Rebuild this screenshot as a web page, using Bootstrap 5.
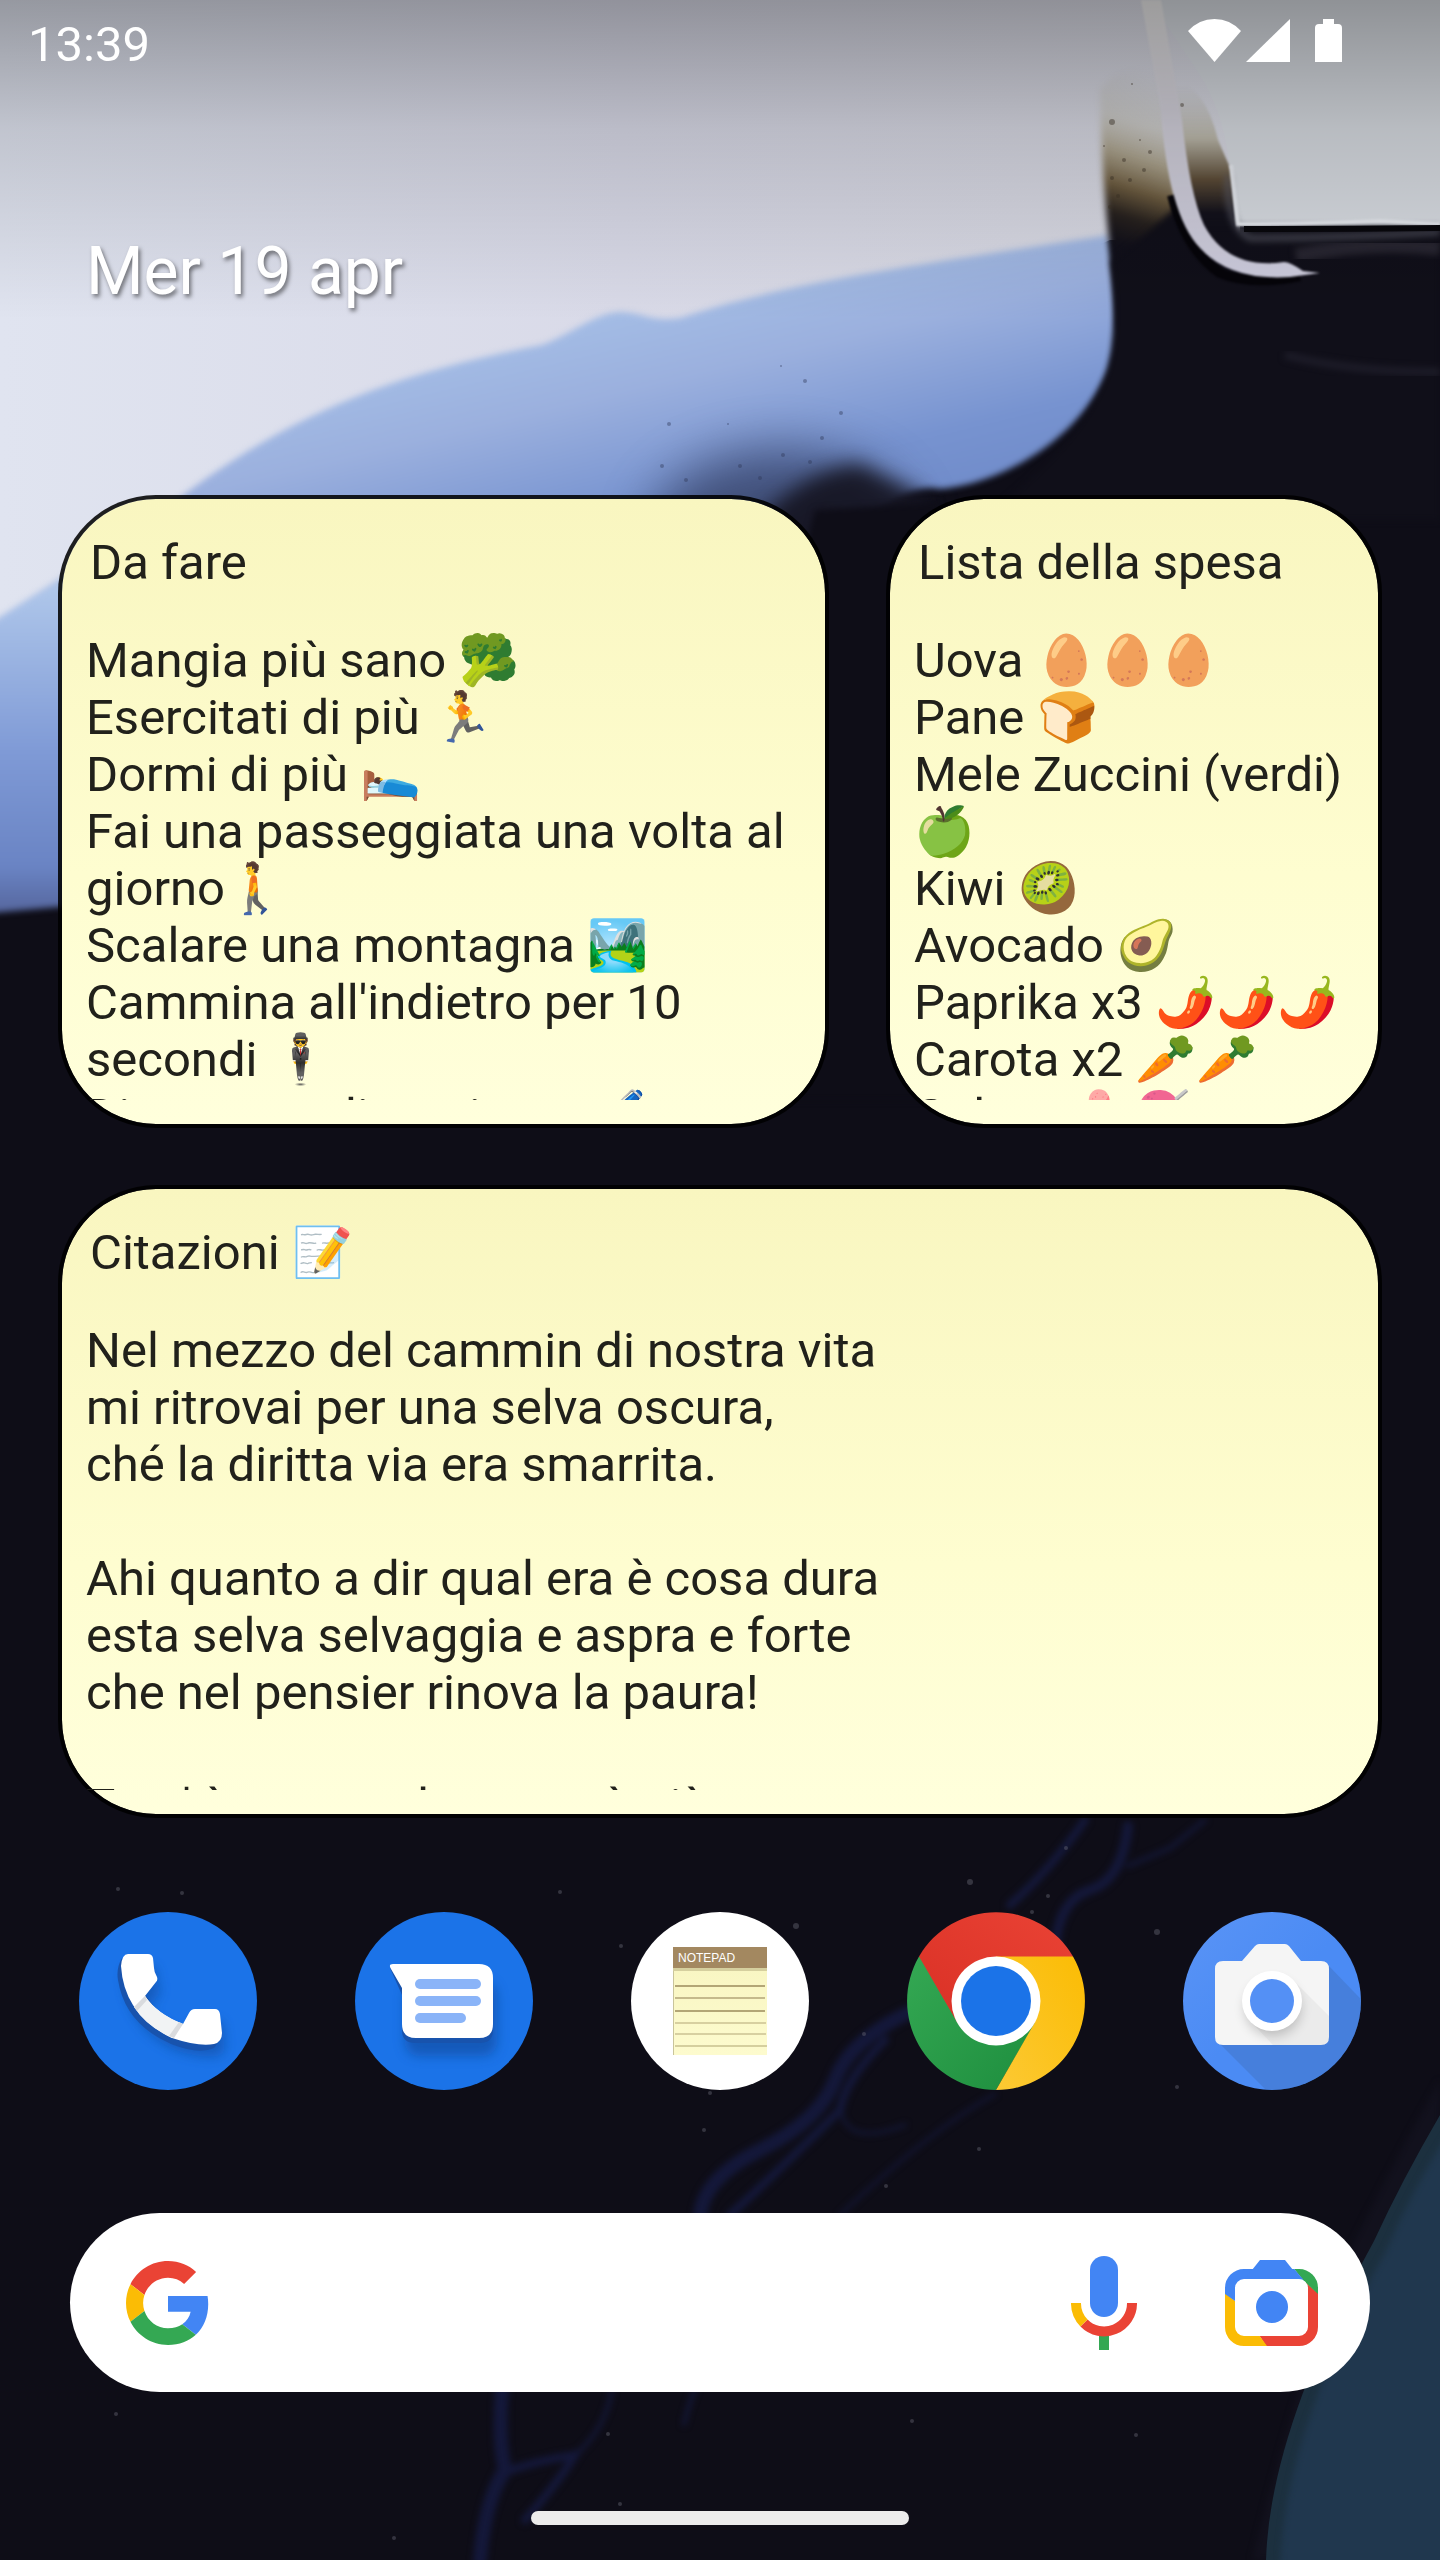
<!DOCTYPE html>
<html lang="it">
<head>
<meta charset="utf-8">
<meta name="viewport" content="width=device-width, initial-scale=1">
<title>Schermata Home</title>
<link href="https://cdn.jsdelivr.net/npm/bootstrap@5.3.0/dist/css/bootstrap.min.css" rel="stylesheet">
<style>
  body {
    font-family: Roboto, "Noto Sans", sans-serif;
    font-size: 49px;
    line-height: 57px;
    background: #0e0d17;
    color: #fff;
  }
  .wallpaper { z-index: -1; }
  .wallpaper filter { color-interpolation-filters: sRGB; }
  .status-bar { padding: 16px 98px 0 28px; }
  .status-icons { height: 46px; }
  .date-line {
    margin: 160px 86px 184px;
    font-size: 66px;
    line-height: 78px;
    text-shadow: 2px 3px 4px rgba(0, 0, 0, .5);
  }
  .date-line a { color: #fff; }
  .notes {
    display: grid;
    grid-template-columns: 771fr 496fr;
    gap: 57px;
    padding: 0 58px;
  }
  .note {
    height: 633px;
    padding: 35px 24px 24px;
    border: 4px solid rgba(0, 0, 0, .87);
    border-radius: 98px;
    background: linear-gradient(#f9f6c0, #fefdd0 60%, #ffffdc) padding-box;
    color: #21211b;
  }
  .note-wide { grid-column: 1 / -1; }
  .note-title { font-size: 49px; line-height: 57px; margin: 0 4px 41px; font-weight: 400; }
  .note-body { overflow: hidden; min-height: 0; }
  .dock { margin: 94px 30px 123px; }
  .app svg { display: block; width: 178px; height: 178px; }
  .search { margin: 0 70px 119px; padding: 0 52px 0 56px; height: 179px; border-radius: 90px; background: #fff; }
  .search input { font-size: 49px; background: transparent; box-shadow: none; }
  .search-tools { gap: 88px; }
  .home-bar { width: 378px; height: 14px; border-radius: 7px; background: #ececec; margin-bottom: 35px; }
</style>
</head>
<body class="min-vh-100 d-flex flex-column position-relative overflow-x-hidden">

<svg class="wallpaper position-absolute top-0 start-0 w-100 h-100" viewBox="0 0 1440 2560" preserveAspectRatio="xMidYMid slice" aria-hidden="true">
  <defs>
    <linearGradient id="shade" x1="0" y1="0" x2="0" y2="1">
      <stop offset="0" stop-color="#000" stop-opacity=".33"/>
      <stop offset=".4" stop-color="#000" stop-opacity=".14"/>
      <stop offset="1" stop-color="#000" stop-opacity="0"/>
    </linearGradient>
    <linearGradient id="mist" gradientUnits="userSpaceOnUse" x1="0" y1="0" x2="1240" y2="0">
      <stop offset="0" stop-color="#e0e4f0"/><stop offset=".5" stop-color="#d9dae8"/><stop offset="1" stop-color="#d6d7e0"/>
    </linearGradient>
    <linearGradient id="blue" gradientUnits="userSpaceOnUse" x1="560" y1="300" x2="680" y2="800">
      <stop offset="0" stop-color="#a6c0e7"/><stop offset=".2" stop-color="#9bb0de"/><stop offset=".42" stop-color="#7793d0"/><stop offset="1" stop-color="#5a72b4"/>
    </linearGradient>
    <linearGradient id="blueSide" gradientUnits="userSpaceOnUse" x1="0" y1="590" x2="0" y2="915">
      <stop offset="0" stop-color="#aec6ea"/><stop offset=".5" stop-color="#7f9ad6"/><stop offset=".85" stop-color="#6a84c4"/><stop offset="1" stop-color="#55659c"/>
    </linearGradient>
    <linearGradient id="smoke" gradientUnits="userSpaceOnUse" x1="1175" y1="80" x2="1125" y2="245">
      <stop offset="0" stop-color="#c5c4bd" stop-opacity="0"/>
      <stop offset=".3" stop-color="#c6c4ba" stop-opacity=".6"/>
      <stop offset=".5" stop-color="#a59b82" stop-opacity=".9"/>
      <stop offset=".68" stop-color="#6d5c40"/>
      <stop offset=".84" stop-color="#27211e"/>
      <stop offset="1" stop-color="#11101a"/>
    </linearGradient>
    <linearGradient id="smokeR" gradientUnits="userSpaceOnUse" x1="0" y1="85" x2="0" y2="220">
      <stop offset="0" stop-color="#c5c4bd" stop-opacity="0"/>
      <stop offset=".4" stop-color="#bab6a8"/>
      <stop offset=".7" stop-color="#5c4c37"/>
      <stop offset=".95" stop-color="#12111b"/>
    </linearGradient>
    <linearGradient id="strip" x1="0" y1="0" x2="0" y2="1">
      <stop offset="0" stop-color="#eae9e9"/><stop offset=".4" stop-color="#d2d0da"/><stop offset="1" stop-color="#cccbdc"/>
    </linearGradient>
    <filter id="soft1" x="-20%" y="-20%" width="140%" height="140%"><feGaussianBlur stdDeviation="1"/></filter>
    <filter id="soft3" x="-20%" y="-20%" width="140%" height="140%"><feGaussianBlur stdDeviation="3"/></filter>
    <filter id="soft9" x="-30%" y="-60%" width="160%" height="220%"><feGaussianBlur stdDeviation="10"/></filter>
    <filter id="soft30" x="-50%" y="-80%" width="200%" height="260%"><feGaussianBlur stdDeviation="26"/></filter>
  </defs>
  <rect width="1440" height="2560" fill="#0e0d17"/>
  <!-- pale sky -->
  <path d="M0 0H1240V240H1110L700 420L0 700Z" fill="url(#mist)"/>
  <path d="M1150 0H1440V226H1229V160Q1222 110 1200 75Z" fill="#d6dae0"/>
  <!-- blue wave -->
  <g filter="url(#soft3)">
    <path d="M-20 630L60 579C100 552 150 522 190 490C300 410 400 372 542 345C570 335 595 313 620 312C645 313 650 322 680 318C790 282 900 268 1109 235C1115 285 1120 325 1108 370C1080 440 1000 484 940 489Q900 480 820 560L700 720H-20Z" fill="url(#blue)"/>
    <path d="M-20 630L70 574V906L-20 914Z" fill="url(#blueSide)"/>
  </g>
  <ellipse cx="780" cy="535" rx="130" ry="85" fill="#2a3354" opacity=".7" filter="url(#soft30)"/>
  <path d="M740 540Q800 468 860 464Q890 480 925 496V620H740Z" fill="#14131f" opacity=".9" filter="url(#soft9)"/>
  <path d="M815 510L940 503V1100H780V640Z" fill="#0e0d17" filter="url(#soft3)"/>
  <g fill="#2c3554" opacity=".4">
    <circle cx="728" cy="424" r="1"/><circle cx="740" cy="466" r="2"/><circle cx="781" cy="366" r="1"/><circle cx="805" cy="381" r="2"/><circle cx="841" cy="413" r="2"/><circle cx="822" cy="438" r="2"/><circle cx="783" cy="455" r="2"/><circle cx="760" cy="478" r="2"/><circle cx="669" cy="424" r="2"/><circle cx="686" cy="480" r="2"/><circle cx="662" cy="466" r="2"/><circle cx="810" cy="462" r="2"/>
  </g>
  <!-- smoked glass corner -->
  <path d="M1100 90Q1120 62 1160 72L1182 240L1150 330L1118 330L1109 240Q1102 180 1100 90Z" fill="url(#smoke)" filter="url(#soft3)"/>
  <path d="M1172 80Q1205 85 1218 140L1231 170L1237 235L1250 270H1178Z" fill="url(#smokeR)" filter="url(#soft1)"/>
  <path d="M1111 262Q1140 240 1178 205L1190 226H1440V520H980Q1100 430 1113 350Q1118 300 1111 262Z" fill="#100f19" filter="url(#soft3)"/>
  <g fill="#3c3226" opacity=".45">
    <circle cx="1112" cy="122" r="3"/><circle cx="1182" cy="105" r="2"/><circle cx="1132" cy="84" r="1"/><circle cx="1104" cy="146" r="1"/><circle cx="1140" cy="140" r="1"/><circle cx="1124" cy="160" r="2"/><circle cx="1150" cy="152" r="2"/><circle cx="1112" cy="178" r="2"/><circle cx="1130" cy="180" r="2"/><circle cx="1118" cy="196" r="2"/><circle cx="1144" cy="170" r="2"/><circle cx="1110" cy="207" r="2"/>
  </g>
  <path d="M1228 175Q1226 226 1250 238Q1340 238 1440 232" fill="none" stroke="#5b5c68" stroke-width="7" opacity=".6" filter="url(#soft3)"/>
  <path d="M1231 165L1238 224Q1300 224 1380 221L1440 224" fill="none" stroke="#e6e9ef" stroke-width="4" filter="url(#soft1)"/>
  <path d="M1244 229Q1340 229 1440 228" fill="none" stroke="#08070c" stroke-width="6"/>
  <path d="M1296 256Q1370 240 1440 248" fill="none" stroke="#272530" stroke-width="15" filter="url(#soft3)"/>
  <path d="M1285 355Q1350 372 1440 372" fill="none" stroke="#1d1c28" stroke-width="8" filter="url(#soft3)"/>
  <path d="M1172 195Q1186 250 1220 273Q1250 286 1300 276" fill="none" stroke="#050409" stroke-width="10" filter="url(#soft1)"/>
  <path d="M1141 0L1161 110Q1168 215 1200 248Q1230 281 1290 277L1320 273L1303 271Q1290 262 1284 262Q1228 270 1204 225Q1190 195 1182 120L1161 0Z" fill="url(#strip)" filter="url(#soft1)"/>
  <!-- night veins -->
  <g fill="none" stroke="#14183a" stroke-linecap="round" filter="url(#soft3)">
    <path d="M1085 1820Q1050 1870 1010 1905" stroke-width="8"/>
    <path d="M1128 1826Q1122 1880 1090 1890T1055 1950" stroke-width="10"/>
    <path d="M1128 1866L1170 1848L1205 1820" stroke-width="4"/>
    <path d="M910 2012Q850 2040 835 2080T760 2150T700 2220" stroke-width="14"/>
    <path d="M885 2040Q845 2080 840 2110Q790 2160 730 2215" stroke-width="8"/>
    <path d="M840 2100Q840 2150 905 2125" stroke-width="3"/>
    <path d="M995 2094Q930 2130 840 2215" stroke-width="3"/>
    <path d="M502 2390Q498 2440 505 2470Q485 2500 480 2560" stroke-width="14"/>
    <path d="M505 2472Q540 2460 575 2455Q560 2480 525 2520" stroke-width="8"/>
    <path d="M612 2390Q605 2430 575 2455" stroke-width="4"/>
    <path d="M695 2390Q690 2400 684 2424" stroke-width="4"/>
  </g>
  <g fill="#6e6e7c" opacity=".4">
    <circle cx="970" cy="1882" r="3"/><circle cx="1066" cy="1848" r="2"/><circle cx="796" cy="1926" r="3"/><circle cx="118" cy="1889" r="2"/><circle cx="182" cy="1893" r="2"/><circle cx="1157" cy="1932" r="3"/><circle cx="710" cy="2093" r="2"/><circle cx="979" cy="2149" r="2"/><circle cx="1048" cy="1896" r="2"/><circle cx="1032" cy="1912" r="2"/><circle cx="864" cy="2034" r="2"/><circle cx="886" cy="2186" r="2"/><circle cx="704" cy="2130" r="2"/><circle cx="394" cy="2538" r="2"/><circle cx="608" cy="2434" r="2"/><circle cx="620" cy="2504" r="2"/><circle cx="912" cy="2421" r="2"/><circle cx="1136" cy="2435" r="2"/><circle cx="116" cy="2414" r="2"/><circle cx="560" cy="1892" r="2"/><circle cx="621" cy="1946" r="2"/><circle cx="1177" cy="2087" r="2"/>
  </g>
  <!-- teal planet -->
  <path d="M1440 2080Q1400 2150 1355 2240T1252 2560H1300L1440 2200Z" fill="#12111d" filter="url(#soft3)"/>
  <path d="M1440 2115Q1402 2180 1374 2241Q1270 2430 1266 2560H1440Z" fill="#1c303f"/>
  <path d="M1450 2130Q1412 2190 1386 2251Q1284 2430 1280 2570H1450Z" fill="#20374e" filter="url(#soft3)"/>
  <rect width="1440" height="320" fill="url(#shade)"/>
</svg>

<header class="status-bar d-flex justify-content-between align-items-start">
  <time>13:39</time>
  <svg class="status-icons" width="154" height="46" viewBox="0 0 154 46" fill="#fff" role="img" aria-label="Wi-Fi, segnale, batteria">
    <path d="M0 15Q11 3 26.500 3Q42 3 53 15L26.500 46Z"/>
    <path d="M102 3V46H58Z"/>
    <path d="M135 3H146V8H150Q154 8 154 12V45Q154 49 150 49H131Q127 49 127 45V12Q127 8 131 8H135Z"/>
  </svg>
</header>

<p class="date-line"><a href="#" class="text-decoration-none">Mer 19 apr</a></p>

<main class="notes">
  <section class="note d-flex flex-column">
    <h2 class="note-title">Da fare</h2>
    <ul class="note-body list-unstyled mb-0">
      <li>Mangia più sano 🥦</li>
      <li>Esercitati di più 🏃</li>
      <li>Dormi di più 🛌</li>
      <li>Fai una passeggiata una volta al giorno🚶</li>
      <li>Scalare una montagna 🏞️</li>
      <li>Cammina all'indietro per 10 secondi 🕴️</li>
      <li>Disegna re di parti e te 🖊️</li>
    </ul>
  </section>
  <section class="note d-flex flex-column">
    <h2 class="note-title">Lista della spesa</h2>
    <ul class="note-body list-unstyled mb-0">
      <li>Uova 🥚🥚🥚</li>
      <li>Pane 🍞</li>
      <li>Mele Zuccini (verdi) 🍏</li>
      <li>Kiwi 🥝</li>
      <li>Avocado 🥑</li>
      <li>Paprika x3 🌶️🌶️🌶️</li>
      <li>Carota x2 🥕🥕</li>
      <li>Gelato 🍨🍧</li>
    </ul>
  </section>
  <section class="note note-wide d-flex flex-column">
    <h2 class="note-title">Citazioni 📝</h2>
    <div class="note-body">
      Nel mezzo del cammin di nostra vita<br>
      mi ritrovai per una selva oscura,<br>
      ché la diritta via era smarrita.<br><br>
      Ahi quanto a dir qual era è cosa dura<br>
      esta selva selvaggia e aspra e forte<br>
      che nel pensier rinova la paura!<br><br>
      Tant' è amara che poco è più morte;
    </div>
  </section>
</main>

<nav class="dock d-flex" aria-label="App">
  <a href="#" class="app flex-fill d-flex justify-content-center" aria-label="Telefono">
    <svg viewBox="0 0 178 178">
      <defs><filter id="drop" x="-30%" y="-30%" width="160%" height="170%"><feGaussianBlur stdDeviation="6"/></filter></defs>
      <circle cx="89" cy="89" r="89" fill="#1b73e8"/>
      <path d="M42 54Q43 42 49 42H69Q73 42 74 46L75 56Q75 60 78 65Q79 68 77 70L66 84Q78 102 104 112L110 101Q112 97 116 97H136Q140 97 141 102L143 121Q143 130 135 132Q120 135 93 126Q45 103 42 54Z" fill="#0c3f8a" opacity=".45" transform="translate(3 12)" filter="url(#drop)"/>
      <path d="M43 46Q37 56 39 68Q46 112 92 132Q120 143 135 136L141 128L93 120L50 60Z" fill="#1853ad"/>
      <path d="M42 54Q43 42 49 42H69Q73 42 74 46L75 56Q75 60 78 65Q79 68 77 70L66 84Q78 102 104 112L110 101Q112 97 116 97H136Q140 97 141 102L143 121Q143 130 135 132Q120 135 93 126Q45 103 42 54Z" fill="#fff"/>
      <path d="M66 84Q78 102 104 112L93 126Q67 114 55 95Z" fill="#f1f3f4"/>
      <path d="M66 84L68 88L58 99L55 95Z M104 112L100 110L90 124L95 126Z" fill="#d9dbde"/>
    </svg>
  </a>
  <a href="#" class="app flex-fill d-flex justify-content-center" aria-label="Messaggi">
    <svg viewBox="0 0 178 178">
      <circle cx="89" cy="89" r="89" fill="#1b73e8"/>
      <rect x="50" y="70" width="92" height="74" rx="14" fill="#0c3f8a" opacity=".5" filter="url(#drop)"/>
      <path d="M35 56L47 83V118Q47 131 60 131H125Q138 131 138 118V80Z" fill="#1853ad"/>
      <path d="M38 52H124Q138 52 138 66V112Q138 126 124 126H61Q47 126 47 112V76L36 57Q33 52 38 52Z" fill="#fff"/>
      <g fill="#8ab4f8"><rect x="60" y="67" width="66" height="10" rx="5"/><rect x="60" y="84" width="66" height="10" rx="5"/><rect x="60" y="101" width="51" height="10" rx="5"/></g>
    </svg>
  </a>
  <a href="#" class="app flex-fill d-flex justify-content-center" aria-label="Notepad">
    <svg viewBox="0 0 178 178">
      <defs><linearGradient id="paper" x1="0" y1="0" x2="0" y2="1"><stop offset="0" stop-color="#f8f5c0"/><stop offset="1" stop-color="#fdfbce"/></linearGradient></defs>
      <circle cx="89" cy="89" r="89" fill="#fff"/>
      <rect x="42" y="35" width="94" height="108" fill="url(#paper)"/>
      <path d="M42.500 56V143" stroke="#c9c49b"/>
      <rect x="42" y="56" width="94" height="3" fill="#d5cf9e"/>
      <rect x="42" y="35" width="94" height="21" fill="#a38860"/>
      <text x="47" y="50" font-family="Liberation Sans, sans-serif" font-size="12" fill="#fff">NOTEPAD</text>
      <g stroke="#b3a676" stroke-width="2"><path d="M44 74H134M44 99H134" /><path d="M44 111H135M44 122H135" stroke-width="1"/><path d="M44 134H136" stroke="#d5cf9e"/><path d="M44 86H134" stroke="#8f7d50" stroke-width="1"/></g>
    </svg>
  </a>
  <a href="#" class="app flex-fill d-flex justify-content-center" aria-label="Chrome">
    <svg viewBox="0 0 178 178">
      <defs>
        <linearGradient id="cr" x1="0" y1="1" x2="1" y2="0"><stop offset="0" stop-color="#d93025"/><stop offset="1" stop-color="#ea4335"/></linearGradient>
        <linearGradient id="cg" x1="0" y1="0" x2="1" y2="1"><stop offset="0" stop-color="#34a853"/><stop offset="1" stop-color="#1e8e3e"/></linearGradient>
        <linearGradient id="cy" x1="0" y1="1" x2="1" y2="0"><stop offset="0" stop-color="#fcc934"/><stop offset="1" stop-color="#fbbc04"/></linearGradient>
      </defs>
      <path d="M12 44.500A89 89 0 0 0 89 178L128 111L89 89Z" fill="url(#cg)"/>
      <path d="M12 44.500A89 89 0 0 1 166 44.500L89 89L50.500 111Z" fill="url(#cr)"/>
      <path d="M166 44.500A89 89 0 0 1 89 178L127.500 111L89 89V44.500Z" fill="url(#cy)"/>
      <circle cx="89" cy="89" r="44.500" fill="#fff"/><circle cx="89" cy="89" r="35" fill="#1b73e8"/>
    </svg>
  </a>
  <a href="#" class="app flex-fill d-flex justify-content-center" aria-label="Fotocamera">
    <svg viewBox="0 0 178 178">
      <defs>
        <linearGradient id="cam" x1="0" y1="0" x2="1" y2="1"><stop offset="0" stop-color="#5a94f6"/><stop offset=".5" stop-color="#4b8bf4"/></linearGradient>
        <clipPath id="camClip"><circle cx="89" cy="89" r="89"/></clipPath>
        <clipPath id="bodyClip"><rect x="32" y="49" width="114" height="84" rx="8"/></clipPath>
      </defs>
      <circle cx="89" cy="89" r="89" fill="url(#cam)"/>
      <path d="M144 52L200 110V200H105L35 130Z" fill="#3f6fb9" opacity=".4" clip-path="url(#camClip)"/>
      <path d="M40 49H59L72 34Q74 32 76 32H102Q104 32 106 34L118 49H138Q146 49 146 57V125Q146 133 138 133H40Q32 133 32 125V57Q32 49 40 49Z" fill="#f5f5f5"/>
      <path d="M110 68L160 118V150H106L68 110Z" fill="#000" opacity=".04" clip-path="url(#bodyClip)"/>
      <circle cx="90" cy="96" r="28" fill="#000" opacity=".2" filter="url(#drop)"/>
      <circle cx="89" cy="89" r="30" fill="#fff"/><circle cx="89" cy="89" r="22" fill="#5490f5"/>
    </svg>
  </a>
</nav>

<form class="search d-flex align-items-center" role="search">
  <label for="q" class="flex-shrink-0 d-flex" aria-label="Cerca con Google">
    <svg width="84" height="84" viewBox="0 0 48 48">
      <path fill="#ea4335" d="M24 9.500c3.540 0 6.710 1.220 9.210 3.600l6.850-6.850C35.900 2.380 30.470 0 24 0 14.620 0 6.510 5.380 2.560 13.220l7.980 6.190C12.430 13.720 17.740 9.500 24 9.500z"/>
      <path fill="#4285f4" d="M46.980 24.550c0-1.570-.15-3.090-.38-4.550H24v9.020h12.940c-.58 2.960-2.260 5.480-4.780 7.180l7.730 6c4.510-4.180 7.090-10.360 7.090-17.650z"/>
      <path fill="#fbbc05" d="M10.530 28.590c-.48-1.450-.76-2.990-.76-4.590s.27-3.140.76-4.590l-7.980-6.190C.92 16.460 0 20.120 0 24c0 3.880.92 7.540 2.560 10.780l7.970-6.190z"/>
      <path fill="#34a853" d="M24 48c6.480 0 11.930-2.130 15.890-5.810l-7.730-6c-2.150 1.450-4.920 2.300-8.160 2.300-6.260 0-11.570-4.220-13.470-9.910l-7.980 6.190C6.510 42.620 14.620 48 24 48z"/>
    </svg>
  </label>
  <input id="q" type="search" class="form-control border-0 flex-fill mx-3">
  <div class="search-tools d-flex align-items-center flex-shrink-0">
    <button type="button" class="btn p-0 border-0 d-flex" aria-label="Ricerca vocale">
      <svg width="66" height="94" viewBox="0 0 66 94">
        <rect x="19" y="0" width="28" height="61" rx="14" fill="#4285f4"/>
        <rect x="28" y="78" width="10" height="16" fill="#34a853"/>
        <path d="M61 47A28 28 0 0 1 13 67" fill="none" stroke="#ea4335" stroke-width="10"/>
        <path d="M5 47A28 28 0 0 0 13 67" fill="none" stroke="#fbbc05" stroke-width="10"/>
      </svg>
    </button>
    <button type="button" class="btn p-0 border-0 d-flex" aria-label="Google Lens">
      <svg width="93" height="86" viewBox="0 0 93 86">
        <defs>
          <clipPath id="lb"><path d="M0 0H62L80 22L47 47L10 41L0 34Z"/></clipPath>
          <clipPath id="lg"><path d="M62 0H93V34L80 22L78 20Z"/></clipPath>
          <clipPath id="lr"><path d="M93 33L80 22L47 47L34 75L41 86H93Z"/></clipPath>
          <clipPath id="ly"><path d="M0 33L10 41L47 47L34 75L42 86H0Z"/></clipPath>
        </defs>
        <g fill="none" stroke-width="10">
          <rect x="5" y="14" width="83" height="67" rx="14" stroke="#ea4335" clip-path="url(#lr)"/>
          <rect x="5" y="14" width="83" height="67" rx="14" stroke="#34a853" clip-path="url(#lg)"/>
          <rect x="5" y="14" width="83" height="67" rx="14" stroke="#fbbc05" clip-path="url(#ly)"/>
          <rect x="5" y="14" width="83" height="67" rx="14" stroke="#4285f4" clip-path="url(#lb)"/>
        </g>
        <path d="M35 0H60L68 10L78 19H20L27 10Z" fill="#4285f4"/>
        <circle cx="47" cy="47" r="16" fill="#4285f4"/>
      </svg>
    </button>
  </div>
</form>

<div class="home-bar mx-auto"></div>

<script src="https://cdn.jsdelivr.net/npm/bootstrap@5.3.0/dist/js/bootstrap.bundle.min.js"></script>
</body>
</html>
